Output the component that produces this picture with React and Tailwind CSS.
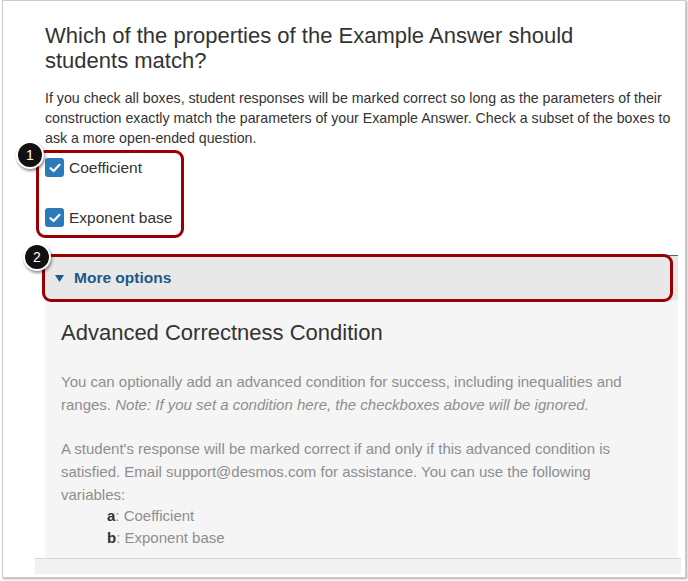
import React from "react";

function CheckBox() {
  return (
    <span className="flex h-[19px] w-[19px] shrink-0 items-center justify-center rounded-[3px] bg-[#2b7bb9]">
      <svg width="12" height="10" viewBox="0 0 12 10">
        <polyline points="1.5,5.2 4.6,8 10.5,1.8" fill="none" stroke="#ffffff" strokeWidth="2.2" strokeLinecap="round" strokeLinejoin="round" />
      </svg>
    </span>
  );
}

function Badge({ n, className }) {
  return (
    <div className={"absolute flex h-[28px] w-[28px] items-center justify-center rounded-full border-2 border-white bg-[#111111] text-[14px] leading-none text-white shadow-[1px_2px_3px_rgba(0,0,0,0.45)] " + className}>
      {n}
    </div>
  );
}

export default function App() {
  return (
    <div className="relative h-[581px] w-[688px] overflow-hidden bg-white font-['Liberation_Sans',Arial,sans-serif]">
      <div className="ml-[2px] flex h-[578px] w-[684px] flex-col border border-[#cccccc] bg-white shadow-[1px_1px_2px_rgba(0,0,0,0.35)]">
        <div className="flex flex-col pl-[42px] pr-[7px] pt-[22px]">
          <h2 className="max-w-[600px] text-[22px] leading-[25px] text-[#333333]">
            Which of the properties of the Example Answer should students match?
          </h2>
          <p className="mt-[15px] w-[632px] text-[14.2px] leading-[20px] text-[#333333]">
            If you check all boxes, student responses will be marked correct so long as the parameters of their construction exactly match the parameters of your Example Answer. Check a subset of the boxes to ask a more open-ended question.
          </p>
          <div className="mt-[10px] flex flex-col gap-[31px]">
            <div className="flex h-[19px] items-center gap-[5px]">
              <CheckBox />
              <span className="text-[15.5px] text-[#333333]">Coefficient</span>
            </div>
            <div className="flex h-[19px] items-center gap-[5px]">
              <CheckBox />
              <span className="text-[15.5px] text-[#333333]">Exponent base</span>
            </div>
          </div>
          <div className="mt-[28px] flex h-[45px] items-center gap-[10px] border-t border-[#2d6a9b] bg-[#e8e8e8] pl-[10px]">
            <svg width="9" height="7" viewBox="0 0 9 7">
              <polygon points="0,0 9,0 4.5,7" fill="#1b5a8a" />
            </svg>
            <span className="text-[15.5px] font-bold text-[#1b5a8a]">More options</span>
          </div>
          <div className="flex flex-col bg-[#f5f5f5] pb-[9px] pl-[16px] pr-[30px] pt-[20px]">
            <h3 className="text-[22px] leading-[26px] text-[#333333]">Advanced Correctness Condition</h3>
            <p className="mt-[24px] text-[15px] leading-[23px] text-[#8e8e8e]">
              You can optionally add an advanced condition for success, including inequalities and ranges. <em>Note: If you set a condition here, the checkboxes above will be ignored.</em>
            </p>
            <p className="mt-[21px] text-[15px] leading-[23px] text-[#8e8e8e]">
              A student's response will be marked correct if and only if this advanced condition is satisfied. Email support@desmos.com for assistance. You can use the following variables:
            </p>
            <ul className="-mt-[1px] pl-[46px] text-[15px] leading-[22px] text-[#8e8e8e]">
              <li><b className="text-[#333333]">a</b>: Coefficient</li>
              <li><b className="text-[#333333]">b</b>: Exponent base</li>
            </ul>
          </div>
        </div>
        <div className="ml-[32px] mr-[4px] h-[16px] border-t border-[#d3d8d8] bg-[#f1f1f1]" />
      </div>

      <div className="absolute left-[36px] top-[150px] h-[88px] w-[148px] rounded-[9px] border-[3px] border-[#9b0000]" />
      <div className="absolute left-[42px] top-[254px] h-[48px] w-[631px] rounded-[9px] border-[3px] border-[#9b0000]" />
      <Badge n="1" className="left-[16px] top-[141px]" />
      <Badge n="2" className="left-[23px] top-[243px]" />
    </div>
  );
}
